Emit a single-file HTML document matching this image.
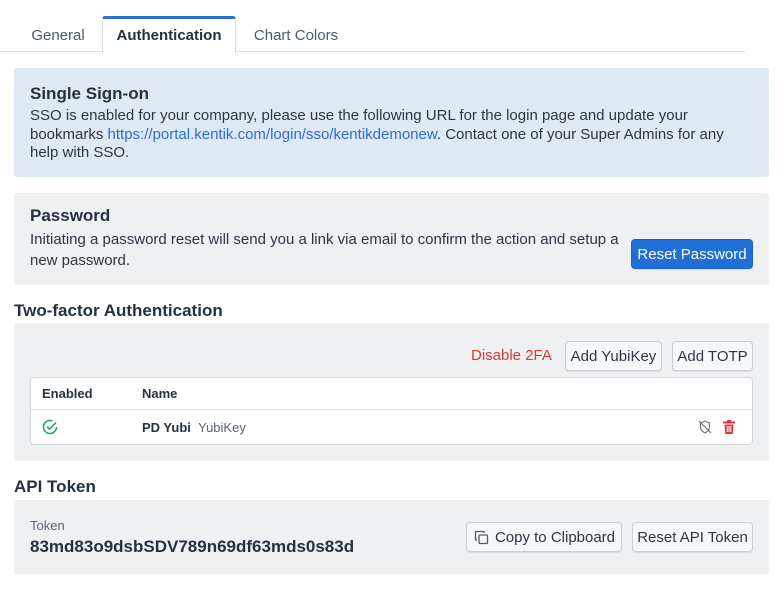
<!DOCTYPE html>
<html><head><style>
*{box-sizing:border-box;margin:0;padding:0}
body{width:784px;height:592px;background:#fff;font-family:"Liberation Sans",sans-serif;color:#263140;position:relative;overflow:hidden}
.a{position:absolute}
.tab{position:absolute;top:18px;height:35px;font-size:15px;line-height:35px;color:#4d5a69;text-align:center}
.box{position:absolute;left:14px;width:755px;border-radius:3px}
.t{font-size:17px;font-weight:bold;color:#263140}
.p{font-size:15px;line-height:18.5px;color:#2b3644}
.btn{position:absolute;height:30px;border:1px solid #c9ced5;border-radius:4px;background:#f6f7f9;font-size:15px;line-height:29px;text-align:center;color:#2b3644;box-shadow:0 1px 1px rgba(0,0,0,.08)}
</style></head><body>
<div class="a" style="left:0;top:51px;width:745px;height:1px;background:#d8dce1"></div>
<div class="tab" style="left:20px;width:76px">General</div>
<div class="a" style="left:102px;top:16px;width:134px;height:37px;background:#fff;border:1px solid #d8dce1;border-bottom:none;border-top:3px solid #2a6fd1;border-radius:3px 3px 0 0"></div>
<div class="tab" style="left:102px;width:134px;color:#263140;font-weight:bold">Authentication</div>
<div class="tab" style="left:244px;width:104px">Chart Colors</div>

<div class="box" style="top:68px;height:109px;background:#dfe9f6"></div>
<div class="a t" style="left:30px;top:84px">Single Sign-on</div>
<div class="a p" style="left:30px;top:107px;width:705px">SSO is enabled for your company, please use the following URL for the login page and update your bookmarks <span style="color:#2a6fd1">https://portal.kentik.com/login/sso/kentikdemonew</span>. Contact one of your Super Admins for any help with SSO.</div>

<div class="box" style="top:193px;height:92px;background:#eef0f2"></div>
<div class="a t" style="left:30px;top:206px">Password</div>
<div class="a p" style="left:30px;top:230px;width:600px;line-height:20.5px">Initiating a password reset will send you a link via email to confirm the action and setup a new password.</div>
<div class="btn" style="left:631px;top:239px;width:122px;background:#1f6fd6;border-color:#1a62c2;color:#fff">Reset Password</div>

<div class="a t" style="left:14px;top:301px">Two-factor Authentication</div>
<div class="box" style="top:323px;height:138px;background:#eef0f2"></div>
<div class="a" style="left:471px;top:347px;font-size:15px;color:#db3737">Disable 2FA</div>
<div class="btn" style="left:565px;top:341px;width:97px">Add YubiKey</div>
<div class="btn" style="left:672px;top:341px;width:81px">Add TOTP</div>
<div class="a" style="left:30px;top:377px;width:723px;height:68px;background:#fff;border:1px solid #d4d8de;border-radius:4px"></div>
<div class="a" style="left:31px;top:409px;width:721px;height:1px;background:#dde0e4"></div>
<div class="a" style="left:42px;top:386px;font-size:13px;font-weight:bold">Enabled</div>
<div class="a" style="left:142px;top:386px;font-size:13px;font-weight:bold">Name</div>
<svg class="a" style="left:42px;top:419px" width="16" height="16" viewBox="0 0 16 16" fill="none" stroke="#2ea36b" stroke-width="1.6"><path d="M14.5 8A6.5 6.5 0 1 1 10.5 2"/><path d="M5 7.5l2.5 2.5L14 3.5"/></svg>
<div class="a" style="left:142px;top:420px;font-size:13px"><b>PD Yubi</b>&nbsp;&nbsp;<span style="color:#5a6573">YubiKey</span></div>
<svg class="a" style="left:698px;top:420px" width="14" height="14" viewBox="0 0 14 14" fill="none" stroke="#6b7480" stroke-width="1.2"><path d="M7 1L2.5 3v4c0 3 2.5 5 4.5 6 2-1 4.5-3 4.5-6V3z"/><path d="M1 1l12 12"/></svg>
<svg class="a" style="left:723px;top:420px" width="12" height="14" viewBox="0 0 12 14" fill="#db3737"><rect x="0" y="1.5" width="12" height="2"/><rect x="4" y="0" width="4" height="2"/><path d="M1.5 4.5h9l-.7 9.5H2.2z"/><g stroke="#fff" stroke-width="1"><path d="M4.2 6v6M6 6v6M7.8 6v6"/></g></svg>

<div class="a t" style="left:14px;top:477px">API Token</div>
<div class="box" style="top:500px;height:74px;background:#eef0f2"></div>
<div class="a" style="left:30px;top:518px;font-size:13px;color:#5a6573">Token</div>
<div class="a" style="left:30px;top:537px;font-size:17px;font-weight:bold">83md83o9dsbSDV789n69df63mds0s83d</div>
<div class="btn" style="left:466px;top:522px;width:156px;padding-left:22px">Copy to Clipboard</div>
<svg class="a" style="left:474px;top:530px" width="15" height="15" viewBox="0 0 15 15" fill="none" stroke="#4d5a69" stroke-width="1.3"><path d="M3 10H1.5V1.5H10V3"/><rect x="5" y="5" width="8.5" height="8.5" rx="1"/></svg>
<div class="btn" style="left:632px;top:522px;width:121px">Reset API Token</div>
</body></html>
